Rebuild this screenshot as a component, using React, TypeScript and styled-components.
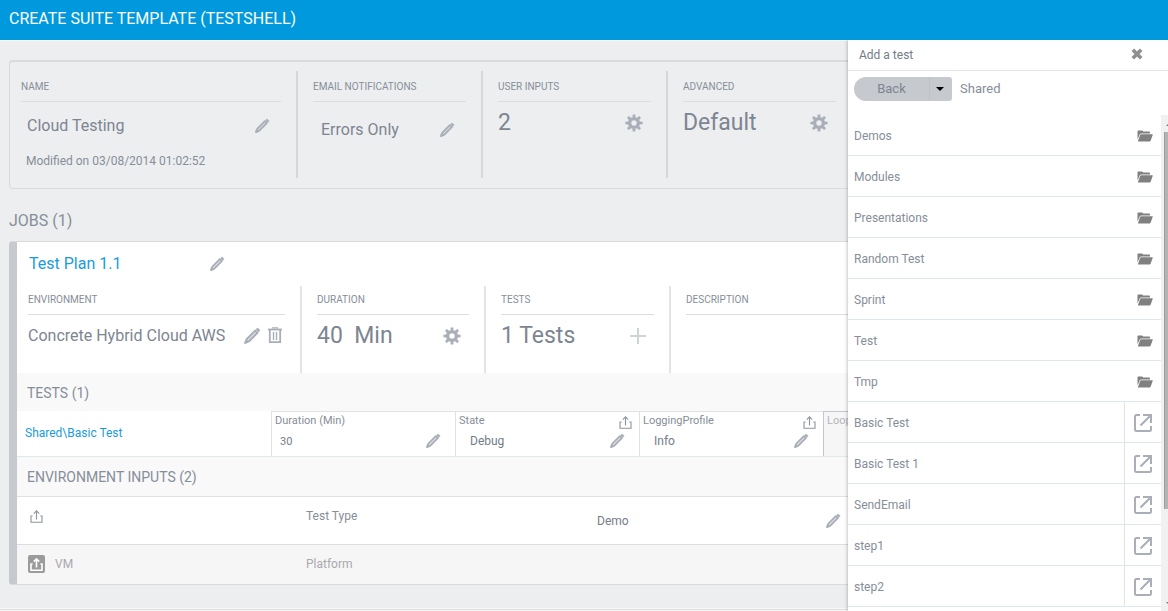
import React from 'react';
import styled, { createGlobalStyle, css } from 'styled-components';

const GlobalStyle = createGlobalStyle`
  * { box-sizing: border-box; }
  body { margin: 0; background: #edeef0; font-family: Roboto, "Liberation Sans", sans-serif; font-size: 13px; color: #868e99; }
  button { font: inherit; color: inherit; background: none; border: 0; padding: 0; cursor: pointer; }
  h1, h2, h3, p, ul { margin: 0; padding: 0; font-weight: 400; }
  a { color: #1a9bdc; text-decoration: none; }
`;

const Page = styled.div`
  display: flex;
  flex-direction: column;
  height: 100vh;
`;
const TopBar = styled.header`
  flex: none;
  height: 40px;
  padding: 0 9px;
  display: flex;
  align-items: center;
  background: #0099de;
  color: #fff;
`;
const PageTitle = styled.h1`
  font-size: 16px;
  line-height: 20px;
  padding-bottom: 3px;
`;
const Body = styled.div`
  flex: 1;
  min-height: 0;
  display: flex;
`;
const Main = styled.main`
  flex: 1;
  min-width: 0;
  overflow: hidden;
  display: flex;
  flex-direction: column;
  padding: 19px 0 0 9px;
  border-top: 1px solid #f6f7f8;
`;
const Summary = styled.section`
  flex: none;
  display: flex;
  border: 1px solid #d9dadd;
  border-top-width: 2px;
  border-right: 0;
  border-radius: 4px 0 0 4px;
  padding: 9px 0 10px;
`;
const Column = styled.div<{ $width?: number; $height: number; $line: string }>`
  flex: ${p => (p.$width ? `0 0 ${p.$width}px` : '1 0 0')};
  min-width: 0;
  height: ${p => p.$height}px;
  padding: 0 15px;
  border-right: ${p => (p.$width ? `2px solid ${p.$line}` : '0')};
  &:first-child { padding-left: 11px; }
  &:last-child { padding-right: ${p => (p.$height > 100 ? '12px' : '0')}; }
`;
const Label = styled.h3<{ $tall?: boolean }>`
  font-size: 10px;
  line-height: 14px;
  padding: ${p => (p.$tall ? '9px 0 7px' : '7px 0 7px')};
  border-bottom: 1px solid #dcdde0;
  white-space: nowrap;
`;
const Field = styled.div<{ $indent?: number; $drop?: number; $end?: number }>`
  display: flex;
  align-items: center;
  justify-content: space-between;
  height: 24px;
  margin-top: ${p => p.$drop ?? 9}px;
  padding: 0 ${p => p.$end ?? 8}px 0 ${p => p.$indent ?? 0}px;
`;
const Value = styled.span<{ $big?: boolean }>`
  white-space: pre;
  color: #7d8592;
  ${p => (p.$big ? css`font-size: 23px; line-height: 24px;` : css`font-size: 16px; line-height: 20px;`)}
`;
const Modified = styled.p`
  font-size: 12px;
  line-height: 16px;
  margin-top: 15px;
  padding-left: 5px;
`;
const IconButton = styled.button`
  display: inline-flex;
  color: #a9aeb8;
  svg { display: block; }
`;
const Icons = styled.span`
  display: flex;
  gap: 6px;
`;
const JobsTitle = styled.h2`
  flex: none;
  font-size: 16px;
  line-height: 20px;
  margin: 22px 0 10px;
`;
const Job = styled.section`
  flex: none;
  border: 1px solid #d9dadd;
  border-left: 8px solid #c6c9ce;
  border-right: 0;
  border-radius: 4px 0 0 4px;
  background: #fff;
`;
const JobHead = styled.div`
  display: flex;
  align-items: center;
  justify-content: space-between;
  width: 219px;
  height: 44px;
  padding: 0 11px 0 12px;
  font-size: 16px;
  line-height: 20px;
`;
const Stats = styled.div`
  display: flex;
`;
const SectionHead = styled.h3<{ $lined?: boolean }>`
  height: ${p => (p.$lined ? 40 : 38)}px;
  line-height: 41px;
  padding-left: 10px;
  font-size: 14px;
  background: #f9f9f9;
  border-bottom: ${p => (p.$lined ? '1px solid #dfe1e3' : '0')};
`;
const TestRow = styled.div`
  display: flex;
  height: 46px;
  border-bottom: 1px solid #e1e8ec;
  overflow: hidden;
`;
const TestName = styled.div`
  flex: 0 0 254px;
  padding-left: 8px;
  font-size: 12px;
  line-height: 45px;
`;
const Cell = styled.div<{ $dim?: boolean }>`
  flex: 0 0 184px;
  height: 46px;
  padding: 2px 14px 0 3px;
  border-left: 1px solid #dfe1e4;
  border-top: 1px solid #dfe1e4;
  ${p => p.$dim && css`
    flex: 1 0 0;
    min-width: 0;
    padding-right: 0;
    overflow: hidden;
    background: #f6f6f6;
    border-color: #c3c7cc;
    color: #b5b5bd;
  `}
`;
const CellTop = styled.div`
  display: flex;
  justify-content: space-between;
  height: 16px;
  margin-right: -9px;
  font-size: 11px;
  line-height: 14px;
`;
const CellValue = styled.div<{ $indent: number; $small?: boolean }>`
  display: flex;
  justify-content: space-between;
  align-items: center;
  height: 22px;
  padding-left: ${p => p.$indent}px;
  font-size: ${p => (p.$small ? 11 : 12)}px;
  color: #747c88;
`;
const EnvRow = styled.div<{ $dim?: boolean }>`
  display: grid;
  grid-template-columns: 289px 291px 1fr;
  height: ${p => (p.$dim ? 39 : 48)}px;
  font-size: 12px;
  line-height: 38px;
  border-bottom: ${p => (p.$dim ? '0' : '1px solid #dcdddf')};
  background: ${p => (p.$dim ? '#f6f6f6' : '#fff')};
  color: ${p => (p.$dim ? '#a8a9ad' : '#868e99')};
`;
const EnvFirst = styled.div`
  display: flex;
  align-items: center;
  gap: 10px;
  height: 38px;
  padding-left: 11px;
`;
const EnvValue = styled.div`
  display: flex;
  align-items: center;
  justify-content: space-between;
  height: 48px;
  padding-right: 7px;
  color: #747c88;
`;
const Badge = styled.button`
  display: flex;
  align-items: center;
  justify-content: center;
  width: 17px;
  height: 18px;
  border-radius: 2px;
  background: #9b9b9b;
  color: #fff;
`;
const ShareButton = styled(IconButton)`
  padding: 2px;
  color: #8d949e;
`;
const Footer = styled.footer`
  flex: none;
  margin: auto 0 0 -9px;
  height: 3px;
  border-top: 1px solid #f8f8f9;
  border-bottom: 1px solid #f4f4f4;
  background: #dcdddf;
`;
const Panel = styled.aside`
  position: relative;
  flex: 0 0 320px;
  display: flex;
  flex-direction: column;
  background: #fff;
  box-shadow: -1px 0 3px rgba(0, 0, 0, 0.22);
  clip-path: inset(0 0 0 -6px);
`;
const PanelHead = styled.div`
  flex: none;
  display: flex;
  align-items: center;
  justify-content: space-between;
  height: 31px;
  padding: 0 25px 2px 11px;
  border-bottom: 1px solid #e3e4e6;
  color: #747c88;
`;
const PanelTitle = styled.h2`
  font-size: 12px;
  line-height: 16px;
  padding-top: 2px;
`;
const Toolbar = styled.div`
  flex: none;
  display: flex;
  align-items: center;
  gap: 8px;
  height: 44px;
  padding: 0 6px 9px;
`;
const Split = styled.div`
  display: flex;
  height: 24px;
`;
const Back = styled.button`
  width: 75px;
  border-radius: 12px 0 0 12px;
  background: #c6c9ce;
  color: #7d8592;
`;
const Drop = styled.button`
  display: flex;
  align-items: center;
  justify-content: center;
  width: 23px;
  padding-right: 2px;
  border-left: 1px solid #bfc3c9;
  border-radius: 0 3px 3px 0;
  background: #c6c9ce;
  color: #000;
`;
const Scroller = styled.div`
  flex: 1;
  min-height: 0;
  display: flex;
`;
const List = styled.ul`
  flex: 1;
  min-width: 0;
  overflow: hidden;
  list-style: none;
`;
const Item = styled.li`
  display: flex;
  align-items: stretch;
  height: 41px;
  border-bottom: 1px solid #dfe7ed;
  font-size: 12px;
`;
const ItemName = styled.span`
  flex: 1;
  padding-left: 6px;
  line-height: 42px;
`;
const FolderButton = styled(IconButton)`
  align-items: center;
  padding: 1px 8px 0 0;
  color: #808080;
`;
const OpenButton = styled(IconButton)`
  width: 37px;
  padding-top: 1px;
  align-items: center;
  justify-content: center;
  border-left: 1px solid #dfe3e7;
`;
const Track = styled.div`
  flex: 0 0 7px;
  display: flex;
  flex-direction: column;
  justify-content: space-between;
  overflow: hidden;
  padding-left: 3px;
  background: #f1f1f1;
`;
const Thumb = styled.div`
  height: 76%;
  margin-bottom: auto;
  background: #b4b4b4;
  border-left: 1px solid #9c9c9c;
`;
const Step = styled.div`
  height: 17px;
  padding: 8px 0 0 2px;
  color: #777;
`;

const Pencil = ({ size = 16 }: { size?: number }) => (
  <svg width={size} height={size} viewBox="0 0 16 16" fill="none" stroke="currentColor" strokeLinejoin="round">
    <path d="M2.2 13.8 3.4 10.6 10.8 3.2 12.8 5.2 5.4 12.6Z" fill="currentColor" fillOpacity="0.35" strokeWidth="1.8" />
    <path d="M1 15 2 11.2 4.8 14Z" fill="currentColor" stroke="none" />
    <path d="M11.6 2.2 12.5 1.4Q13.2 1 13.8 1.6L14.5 2.3Q15 2.9 14.6 3.6L13.8 4.4Z" fill="currentColor" strokeWidth="0.8" />
  </svg>
);
const Gear = () => (
  <svg width="18" height="18" viewBox="0 0 18 18" fill="none" stroke="currentColor">
    <circle cx="9" cy="9" r="4.4" strokeWidth="3.4" />
    {[0, 45, 90, 135, 180, 225, 270, 315].map(a => (
      <path key={a} d="M7.5 3.6 7.7 0.4H10.3L10.5 3.6Z" fill="currentColor" stroke="none" transform={`rotate(${a} 9 9)`} />
    ))}
  </svg>
);
const Trash = () => (
  <svg width="16" height="17" viewBox="0 0 16 17" fill="none" stroke="currentColor">
    <path d="M1 2.5H15" strokeWidth="1.8" />
    <path d="M5.5 1.5V0.8H10.5V1.5" strokeWidth="1.2" />
    <path d="M2.8 3V15.2H13.2V3" strokeWidth="1.8" />
    <path d="M6.5 5V13M9.5 5V13" strokeWidth="1.4" />
  </svg>
);
const Plus = () => (
  <svg width="16" height="16" viewBox="0 0 16 16" stroke="#cfd2d8" strokeWidth="2">
    <path d="M0 8H16M8 0V16" />
  </svg>
);
const Share = ({ weight = 1.1 }: { weight?: number }) => (
  <svg width="13" height="13" viewBox="0 0 13 13" fill="none" stroke="currentColor" strokeWidth={weight}>
    <path d="M2.6 6H1V12.2H12V6H10.4" />
    <path d="M6.5 9.5V1M3.8 3.6 6.5 0.9 9.2 3.6" />
  </svg>
);
const OpenOut = () => (
  <svg width="20" height="20" viewBox="0 0 20 20" fill="none" stroke="currentColor" strokeWidth="2">
    <path d="M7 2H3.5Q2 2 2 3.5V16.5Q2 18 3.5 18H16.5Q18 18 18 16.5V13" />
    <path d="M10 2H18V10M17.5 2.5 7.5 12.5" />
  </svg>
);
const FolderOpen = () => (
  <svg width="16" height="12" viewBox="0 0 16 12" fill="currentColor">
    <path d="M0.5 9.6V1.3Q0.5 0.5 1.3 0.5H5Q5.6 0.5 5.8 1L6 1.6H12.2Q13 1.6 13 2.4V3.4H4.2Q3.2 3.4 2.8 4.2Z" />
    <path d="M4.3 4.3H15.3Q16 4.3 15.7 5L13.6 10.8Q13.3 11.5 12.6 11.5H1.4Q0.8 11.5 1 10.9L3.1 5Q3.4 4.3 4.3 4.3Z" />
  </svg>
);
const Close = () => (
  <svg width="12" height="12" viewBox="0 0 12 12" stroke="#8f8f8f" strokeWidth="3.6">
    <path d="M1.8 1.8 10.2 10.2M10.2 1.8 1.8 10.2" />
  </svg>
);
const Caret = () => (
  <svg width="8" height="4" viewBox="0 0 8 4" fill="currentColor"><path d="M0 0H8L4 4Z" /></svg>
);
const ScrollArrow = ({ down }: { down?: boolean }) => (
  <svg width="6" height="3" viewBox="0 0 6 3" fill="currentColor" display="block">
    <path d={down ? 'M0 0H6L3 3Z' : 'M0 3H6L3 0Z'} />
  </svg>
);

const Edit = ({ label, size }: { label: string; size?: number }) => (
  <IconButton aria-label={`Edit ${label}`}><Pencil size={size} /></IconButton>
);

const folders = ['Demos', 'Modules', 'Presentations', 'Random Test', 'Sprint', 'Test', 'Tmp'];
const tests = ['Basic Test', 'Basic Test 1', 'SendEmail', 'step1', 'step2'];

export default function App() {
  return (
    <Page>
      <GlobalStyle />
      <TopBar><PageTitle>CREATE SUITE TEMPLATE (TESTSHELL)</PageTitle></TopBar>
      <Body>
        <Main>
          <Summary>
            <Column $width={288} $height={107} $line="#d5d7da">
              <Label $tall>NAME</Label>
              <Field $indent={6} $drop={12} $end={11}><Value>Cloud Testing</Value><Edit label="name" /></Field>
              <Modified>Modified on 03/08/2014 01:02:52</Modified>
            </Column>
            <Column $width={185} $height={107} $line="#d5d7da">
              <Label $tall>EMAIL NOTIFICATIONS</Label>
              <Field $indent={8} $drop={16} $end={11}><Value>Errors Only</Value><Edit label="email notifications" /></Field>
            </Column>
            <Column $width={185} $height={107} $line="#d5d7da">
              <Label $tall>USER INPUTS</Label>
              <Field><Value $big>2</Value><IconButton aria-label="User input settings"><Gear /></IconButton></Field>
            </Column>
            <Column $height={107} $line="#d5d7da">
              <Label $tall>ADVANCED</Label>
              <Field><Value $big>Default</Value><IconButton aria-label="Advanced settings"><Gear /></IconButton></Field>
            </Column>
          </Summary>
          <JobsTitle>JOBS (1)</JobsTitle>
          <Job>
            <JobHead><a href="#plan">Test Plan 1.1</a><Edit label="plan" /></JobHead>
            <Stats>
              <Column $width={285} $height={87} $line="#e3e4e6">
                <Label>ENVIRONMENT</Label>
                <Field $end={2}>
                  <Value>Concrete Hybrid Cloud AWS</Value>
                  <Icons><Edit label="environment" size={18} /><IconButton aria-label="Delete environment"><Trash /></IconButton></Icons>
                </Field>
              </Column>
              <Column $width={184} $height={87} $line="#e3e4e6">
                <Label>DURATION</Label>
                <Field><Value $big>40  Min</Value><IconButton aria-label="Duration settings"><Gear /></IconButton></Field>
              </Column>
              <Column $width={185} $height={87} $line="#e3e4e6">
                <Label>TESTS</Label>
                <Field><Value $big>1 Tests</Value><IconButton aria-label="Add a test"><Plus /></IconButton></Field>
              </Column>
              <Column $height={87} $line="#e3e4e6"><Label>DESCRIPTION</Label></Column>
            </Stats>
            <SectionHead>TESTS (1)</SectionHead>
            <TestRow>
              <TestName><a href="#basic-test">Shared\Basic Test</a></TestName>
              <Cell>
                <CellTop>Duration (Min)</CellTop>
                <CellValue $indent={5} $small>30<Edit label="duration" /></CellValue>
              </Cell>
              <Cell>
                <CellTop>State<ShareButton aria-label="Publish state"><Share /></ShareButton></CellTop>
                <CellValue $indent={11}>Debug<Edit label="state" /></CellValue>
              </Cell>
              <Cell>
                <CellTop>LoggingProfile<ShareButton aria-label="Publish logging profile"><Share /></ShareButton></CellTop>
                <CellValue $indent={11}>Info<Edit label="logging profile" /></CellValue>
              </Cell>
              <Cell $dim><CellTop>Loop</CellTop></Cell>
            </TestRow>
            <SectionHead $lined>ENVIRONMENT INPUTS (2)</SectionHead>
            <EnvRow>
              <EnvFirst><ShareButton aria-label="Publish test type"><Share /></ShareButton></EnvFirst>
              <span>Test Type</span>
              <EnvValue>Demo<Edit label="test type" /></EnvValue>
            </EnvRow>
            <EnvRow $dim>
              <EnvFirst><Badge aria-label="Unpublish VM"><Share weight={1.6} /></Badge>VM</EnvFirst>
              <span>Platform</span>
            </EnvRow>
          </Job>
          <Footer />
        </Main>
        <Panel>
          <PanelHead>
            <PanelTitle>Add a test</PanelTitle>
            <IconButton aria-label="Close"><Close /></IconButton>
          </PanelHead>
          <Toolbar>
            <Split><Back>Back</Back><Drop aria-label="More locations"><Caret /></Drop></Split>
            <span>Shared</span>
          </Toolbar>
          <Scroller>
            <List>
              {folders.map(name => (
                <Item key={name}>
                  <ItemName>{name}</ItemName>
                  <FolderButton aria-label={`Open folder ${name}`}><FolderOpen /></FolderButton>
                </Item>
              ))}
              {tests.map(name => (
                <Item key={name}>
                  <ItemName>{name}</ItemName>
                  <OpenButton aria-label={`Add ${name}`}><OpenOut /></OpenButton>
                </Item>
              ))}
            </List>
            <Track>
              <Step><ScrollArrow /></Step>
              <Thumb />
              <Step><ScrollArrow down /></Step>
            </Track>
          </Scroller>
        </Panel>
      </Body>
    </Page>
  );
}
